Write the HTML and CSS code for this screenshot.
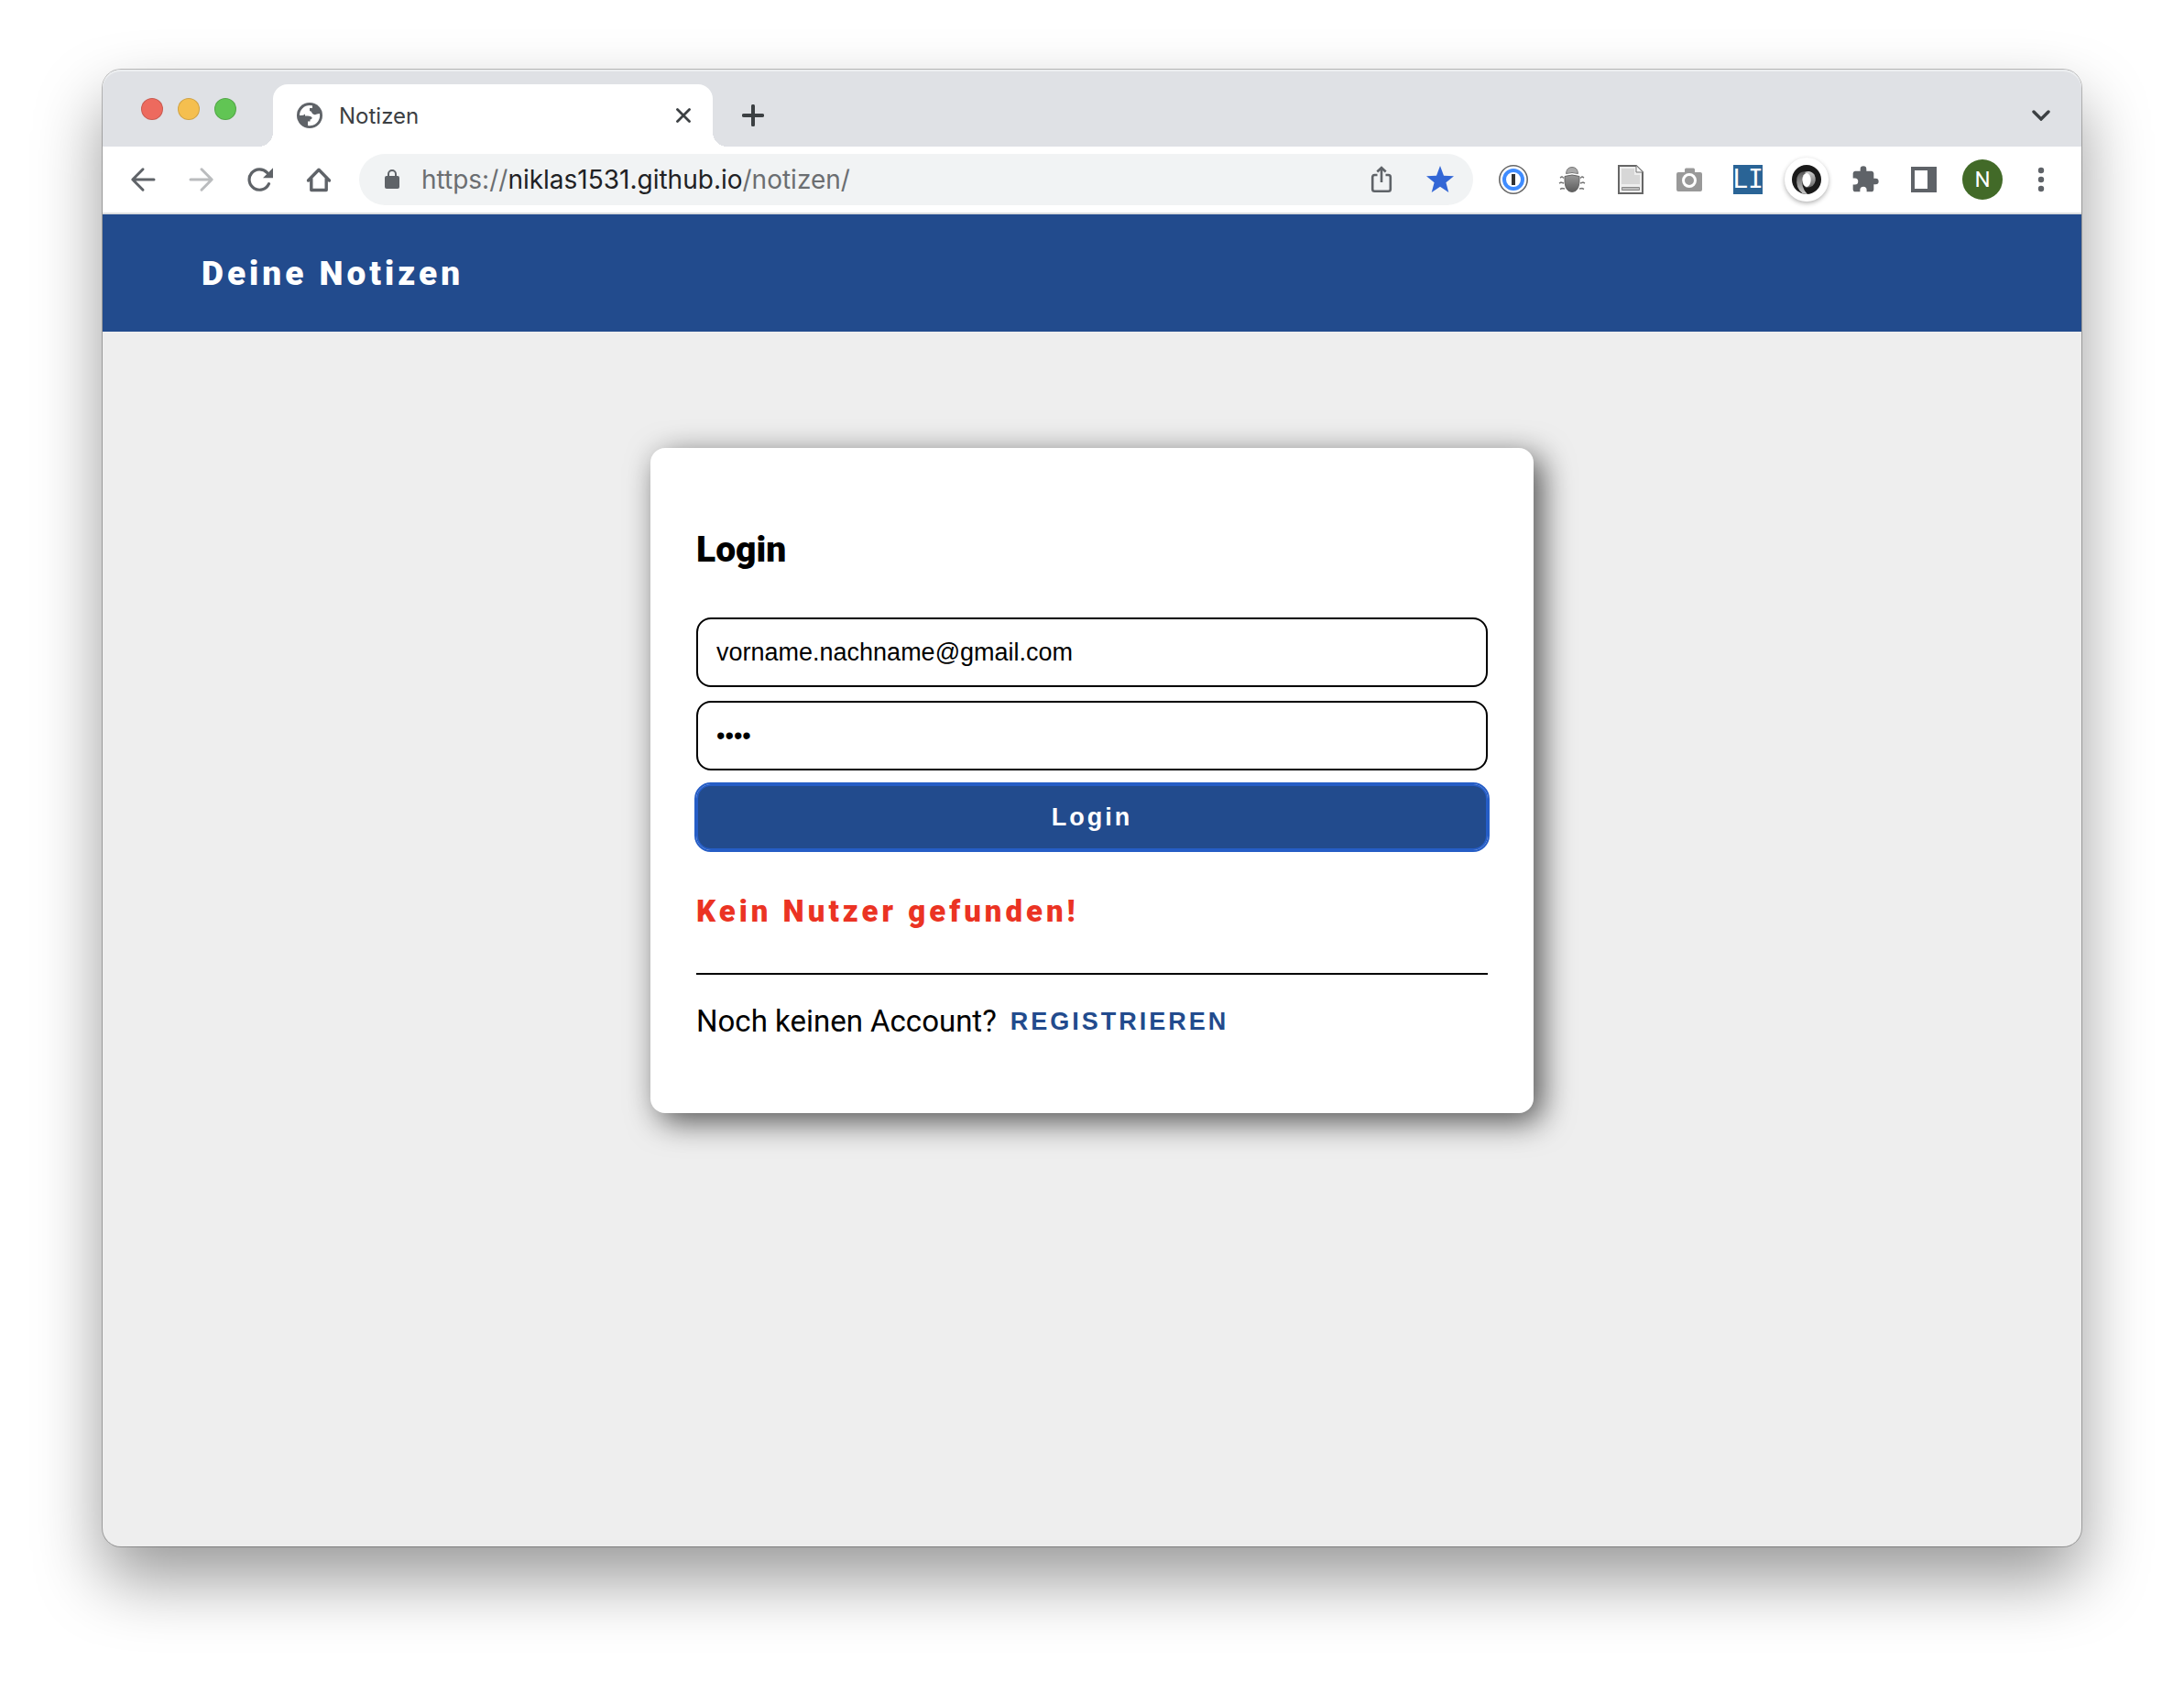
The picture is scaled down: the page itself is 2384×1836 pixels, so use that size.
FILE: index.html
```html
<!DOCTYPE html>
<html lang="de">
<head>
<meta charset="utf-8">
<meta name="viewport" content="width=device-width, initial-scale=1">
<title>Notizen</title>
<link rel="stylesheet" href="styles.css">
</head>
<body>
<div class="window">
  <div class="tabstrip">
    <div class="lights">
      <button class="light light-red" aria-label="Schließen"></button>
      <button class="light light-yellow" aria-label="Minimieren"></button>
      <button class="light light-green" aria-label="Maximieren"></button>
    </div>
    <div class="tab">
      <svg class="favicon" viewBox="0 0 28 28" aria-hidden="true"><circle cx="14" cy="14" r="14" fill="#5f6368"/><path fill="#fff" d="M3 14A11 11 0 0 1 14 3L17 3.300V6H14V9Q16 9 17 12Q19 14 22 12.500L24.900 12A11 11 0 0 1 12 25V20.500H14.500V18.500Q17 18 16.500 16Q15.500 14.500 12 14.500H9V12.500Q7 14.500 3 14Z"/></svg>
      <span class="tab-title">Notizen</span>
      <button class="icon-button" aria-label="Tab schließen"><svg width="16" height="16" viewBox="0 0 16 16"><path d="M1.500 1.500l13 13M14.500 1.500l-13 13" stroke="#3c4043" stroke-width="2.800" stroke-linecap="round"/></svg></button>
    </div>
    <button class="icon-button" aria-label="Neuer Tab"><svg width="24" height="24" viewBox="0 0 24 24"><path d="M12 1.800v20.400M1.800 12h20.400" stroke="#3c4043" stroke-width="4" stroke-linecap="round"/></svg></button>
    <button class="icon-button tab-search" aria-label="Tabs durchsuchen"><svg width="20" height="12" viewBox="0 0 20 12"><path d="M2 2l8 8 8-8" fill="none" stroke="#3c4043" stroke-width="3.400" stroke-linecap="round"/></svg></button>
  </div>

  <div class="toolbar">
    <div class="navigation">
      <button class="icon-button" aria-label="Zurück"><svg width="28" height="28" viewBox="0 0 28 28"><path d="M26 14H3M14 2.800L2.800 14 14 25.200" fill="none" stroke="#5f6368" stroke-width="3" stroke-linecap="round" stroke-linejoin="round"/></svg></button>
      <button class="icon-button" aria-label="Vor"><svg width="28" height="28" viewBox="0 0 28 28"><path d="M2 14h23M14 2.800L25.200 14 14 25.200" fill="none" stroke="#babcbe" stroke-width="3" stroke-linecap="round" stroke-linejoin="round"/></svg></button>
      <button class="icon-button" aria-label="Neu laden"><svg width="28" height="28" viewBox="0 0 28 28"><path d="M23.500 18.600A11.200 11.200 0 1 1 21.500 6.400" fill="none" stroke="#5f6368" stroke-width="3.200" stroke-linecap="round"/><path d="M28 1.300V12.300H17z" fill="#5f6368"/></svg></button>
      <button class="icon-button" aria-label="Startseite"><svg width="28" height="28" viewBox="0 0 28 28"><path d="M2.500 15L14 3.300 25.500 15M5.800 13V25.500H22.200V13" fill="none" stroke="#5f6368" stroke-width="3.400" stroke-linecap="round" stroke-linejoin="round"/></svg></button>
    </div>
    <div class="omnibox">
      <svg width="16" height="22" viewBox="0 0 16 22" aria-hidden="true"><rect y="7" width="16" height="14" rx="2" fill="#5f6368"/><path d="M4 8V5a4 4 0 0 1 8 0v3" fill="none" stroke="#5f6368" stroke-width="2"/></svg>
      <div class="url" role="textbox" aria-label="Adresse">https://<span class="host">niklas1531.github.io</span>/notizen/</div>
      <button class="icon-button" aria-label="Teilen"><svg width="24" height="30" viewBox="0 0 24 30"><path d="M7.500 10H4.500Q2.200 10 2.200 12.300V25.500Q2.200 27.800 4.500 27.800H19.500Q21.800 27.800 21.800 25.500V12.300Q21.800 10 19.500 10H16.500M12 18V2.500M7.300 6.500L12 2l4.700 4.500" fill="none" stroke="#5f6368" stroke-width="2.600"/></svg></button>
      <button class="icon-button" aria-label="Lesezeichen"><svg width="30" height="30" viewBox="0 0 30 30"><path fill="#3367d6" d="M15 0l4 10.800 11 .4-8.600 7L24.300 29 15 22.700 5.700 29l2.900-10.800L0 11.200l11-.4z"/></svg></button>
    </div>
    <div class="extensions">
      <button class="icon-button" aria-label="Passwörter"><svg width="32" height="32" viewBox="0 0 32 32"><circle cx="16" cy="16" r="15.200" fill="#fff" stroke="#666" stroke-width="1.600"/><circle cx="16" cy="16" r="10" fill="#fff" stroke="#3f8cff" stroke-width="4"/><path fill="#333" d="M14 10h4v12h-4z"/></svg></button>
      <button class="icon-button" aria-label="Debugger"><svg width="32" height="32" viewBox="0 0 32 32"><defs><linearGradient id="shell" x2="0" y2="1"><stop stop-color="#999"/><stop offset="1" stop-color="#5c5c5c"/></linearGradient></defs><path d="M9.500 9.500Q10 2.500 16 2.500t6.500 7Q16 7.500 9.500 9.500z" fill="#aaa" stroke="#777"/><path d="M8 12.500Q16 9.500 24 12.500 25 29.500 16 29.500 7 29.500 8 12.500z" fill="url(#shell)" stroke="#666"/><path d="M7 14.500L5 12.800 3 14M7 20l-3-1-2 1M8 26l-3-.5L3 26.500M25 14.500l2-1.700 2 1.200M25 20l3-1 2 1M24 26l3-.5 2 1" fill="none" stroke="#777" stroke-width="1.500"/></svg></button>
      <button class="icon-button" aria-label="Dokument"><svg width="32" height="32" viewBox="0 0 32 32"><path d="M3 1H22L29 8V31H3z" fill="#eee" stroke="#666" stroke-width="2"/><path d="M6 4H20V11H26V21H6z" fill="#d7d7d7"/><path d="M22 1v7h7" fill="#f7f7f7" stroke="#777"/><path d="M6.500 24.500h19v3h-19z" fill="#bbb" stroke="#888"/></svg></button>
      <button class="icon-button" aria-label="Bildschirmfoto"><svg width="32" height="32" viewBox="0 0 32 32"><path fill="#999" d="M4 8h7V5q0-1.500 1.500-1.500h8Q22 3.500 22 5v3h6q2 0 2 2v17q0 2-2 2H4q-2 0-2-2V10q0-2 2-2z"/><circle cx="16" cy="17" r="6.500" fill="none" stroke="#fff" stroke-width="3"/></svg></button>
      <button class="icon-button badge-li" aria-label="LI">LI</button>
      <button class="icon-button badge-ring" aria-label="JSON"><svg width="32" height="32" viewBox="0 0 32 32"><defs><linearGradient id="left-arc" x2="0" y2="1"><stop stop-color="#555"/><stop offset="1" stop-color="#ccc"/></linearGradient><linearGradient id="right-arc" x2="0" y2="1"><stop stop-color="#ccc"/><stop offset="1" stop-color="#666"/></linearGradient></defs><circle cx="16" cy="16" r="16" fill="#1a1a1a"/><path d="M16 7.500Q8 6 5.500 14 3.500 25 12 31.500L17 32Q9 24 12 13z" fill="url(#left-arc)"/><path d="M14 8Q20 5 24.500 10.500 28 18 22.500 23 18 25.500 14.500 24.500 21 20 20 14z" fill="url(#right-arc)"/><ellipse cx="16" cy="16.500" rx="4.700" ry="7.500" fill="#fff"/></svg></button>
      <button class="icon-button" aria-label="Erweiterungen"><svg width="32" height="32" viewBox="0 0 24 24"><path fill="#5f6368" d="M20.500 11H19V7c0-1.100-.9-2-2-2h-4V3.500a2.500 2.500 0 0 0-5 0V5H4c-1.100 0-2 .9-2 2v3.800h1.500a2.700 2.700 0 0 1 0 5.400H2V20c0 1.100.9 2 2 2h3.800v-1.500a2.700 2.700 0 0 1 5.400 0V22H17c1.100 0 2-.9 2-2v-4h1.500a2.500 2.500 0 0 0 0-5z"/></svg></button>
      <button class="icon-button" aria-label="Seitenleiste"><svg width="28" height="28" viewBox="0 0 28 28"><path fill="#5f6368" fill-rule="evenodd" d="M0 0h28v28H0zM4 4v20h14V4z"/></svg></button>
      <button class="icon-button avatar" aria-label="Profil N">N</button>
      <button class="icon-button" aria-label="Menü"><svg width="8" height="28" viewBox="0 0 8 28"><g fill="#5f6368"><circle cx="4" cy="4" r="3.200"/><circle cx="4" cy="14" r="3.200"/><circle cx="4" cy="24" r="3.200"/></g></svg></button>
    </div>
  </div>

  <header class="app-header"><h1>Deine Notizen</h1></header>
  <main class="content">
    <section class="card">
      <form class="login-form">
        <h2>Login</h2>
        <input class="field" type="email" aria-label="E-Mail" value="vorname.nachname@gmail.com">
        <input class="field" type="password" aria-label="Passwort" value="1234">
        <button class="submit" type="button">Login</button>
      </form>
      <p class="error" role="alert">Kein Nutzer gefunden!</p>
      <div class="register">
        <span>Noch keinen Account?</span>
        <button class="register-button" type="button">REGISTRIEREN</button>
      </div>
    </section>
  </main>
</div>
</body>
</html>
```
FILE: styles.css
```css
* {
  box-sizing: border-box;
}

body {
  margin: 0;
  min-height: 100vh;
  display: flex;
  padding: 76px 112px 148px;
  background: #fff;
  font-family: Roboto, sans-serif;
}

button {
  border: 0;
  padding: 0;
  background: none;
  cursor: pointer;
}

.window {
  flex: 1;
  min-width: 0;
  display: flex;
  flex-direction: column;
  border-radius: 20px;
  background: #eee;
  box-shadow: 0 0 0 1px rgba(0, 0, 0, 0.25), 0 36px 72px rgba(0, 0, 0, 0.4);
}

/* Tab strip */
.tabstrip {
  display: flex;
  align-items: center;
  height: 84px;
  padding: 16px 34px 0 42px;
  border-radius: 20px 20px 0 0;
  background: #dfe1e5;
  box-shadow: inset 0 2px #eceef0;
}

.lights {
  display: flex;
  gap: 16px;
  margin-right: 40px;
  padding-bottom: 14px;
}

.light {
  width: 24px;
  height: 24px;
  border-radius: 50%;
  border: 1px solid rgba(0, 0, 0, 0.15);
}

.light-red { background: #ed6a5e; }
.light-yellow { background: #f5bf4f; }
.light-green { background: #61c554; }

.tab {
  position: relative;
  display: flex;
  align-items: center;
  width: 480px;
  height: 68px;
  margin-right: 32px;
  padding: 0 24px 0 26px;
  border-radius: 16px 16px 0 0;
  background: #fff;
}

.tab::before,
.tab::after {
  content: "";
  position: absolute;
  bottom: 0;
  width: 16px;
  height: 16px;
}

.tab::before {
  right: 100%;
  background: radial-gradient(circle at 0 0, transparent 16px, #fff 16px);
}

.tab::after {
  left: 100%;
  background: radial-gradient(circle at 100% 0, transparent 16px, #fff 16px);
}

.favicon {
  width: 28px;
  height: 28px;
}

.tab-title {
  flex: 1;
  margin-left: 18px;
  font: 24px Inter, sans-serif;
  color: #3c4043;
}

.icon-button {
  display: flex;
  align-items: center;
  justify-content: center;
  flex: none;
}

.tab-search {
  margin-left: auto;
}

/* Toolbar */
.toolbar {
  display: flex;
  align-items: center;
  height: 74px;
  padding: 0 24px 0 30px;
  border-bottom: 2px solid #dcdee0;
  background: #fff;
}

.navigation {
  display: flex;
  gap: 36px;
  margin-right: 30px;
}

.omnibox {
  flex: 1;
  min-width: 0;
  display: flex;
  align-items: center;
  height: 56px;
  margin-right: 24px;
  padding: 0 20px 0 28px;
  border-radius: 28px;
  background: #f1f3f4;
}

.omnibox .icon-button {
  width: 32px;
  margin-left: 32px;
}

.url {
  flex: 1;
  min-width: 0;
  margin-left: 24px;
  overflow: hidden;
  white-space: nowrap;
  font: 28px Inter, sans-serif;
  color: #6b6e71;
}

.host {
  color: #202124;
}

.extensions {
  display: flex;
  align-items: center;
  gap: 24px;
}

.extensions .icon-button {
  width: 40px;
  height: 48px;
}

.extensions .badge-li {
  width: 32px;
  height: 32px;
  margin: 0 4px;
  background: #2a6496;
  color: #fff;
  font: 28px/34px "DejaVu Sans Mono", monospace;
}

.extensions .badge-ring {
  width: 48px;
  margin: 0 -4px;
  border-radius: 50%;
  background: #fff;
  box-shadow: 0 2px 5px rgba(0, 0, 0, 0.3);
}

.extensions .avatar {
  width: 44px;
  height: 44px;
  margin: 0 -2px;
  border-radius: 50%;
  background: #426a28;
  color: #fff;
  font: 24px Roboto, sans-serif;
}

/* Page */
.app-header {
  display: flex;
  align-items: center;
  height: 128px;
  padding: 0 5%;
  background: #224b8d;
  color: #fff;
}

h1,
h2,
p {
  margin: 0;
}

h1 {
  font-size: 37px;
  font-weight: 900;
  letter-spacing: 4px;
}

.content {
  display: flex;
  justify-content: center;
  padding: 127px 5%;
}

.card {
  width: 100%;
  max-width: 964px;
  padding: 87px 50px 80px;
  border-radius: 16px;
  background: #fff;
  color: #000;
  box-shadow: 9px 9px 34px rgba(0, 0, 0, 0.66);
}

.login-form {
  display: flex;
  flex-direction: column;
  gap: 15px;
}

h2 {
  margin-bottom: 35px;
  font-size: 39px;
  line-height: 48px;
  font-weight: 900;
}

.field {
  width: 100%;
  height: 76px;
  padding: 0 20px;
  border: 2px solid #000;
  border-radius: 16px;
  background: #fff;
  color: #000;
  font: 27px "Liberation Sans", sans-serif;
}

.submit {
  height: 72px;
  border: 2px solid #255dc6;
  border-radius: 16px;
  outline: 2px solid #255dc6;
  background: #224b8d;
  color: #fff;
  font: bold 27px "Liberation Sans", sans-serif;
  letter-spacing: 3px;
}

.error {
  padding: 47px 0 47px;
  border-bottom: 2px solid #000;
  font-size: 33px;
  line-height: 40px;
  font-weight: 900;
  letter-spacing: 4px;
  color: #eb3323;
}

.register {
  display: flex;
  align-items: center;
  gap: 15px;
  padding-top: 31px;
  font-size: 33px;
  line-height: 40px;
}

.register-button {
  color: #224b8d;
  font: bold 27px "Liberation Sans", sans-serif;
  letter-spacing: 3px;
}
```
